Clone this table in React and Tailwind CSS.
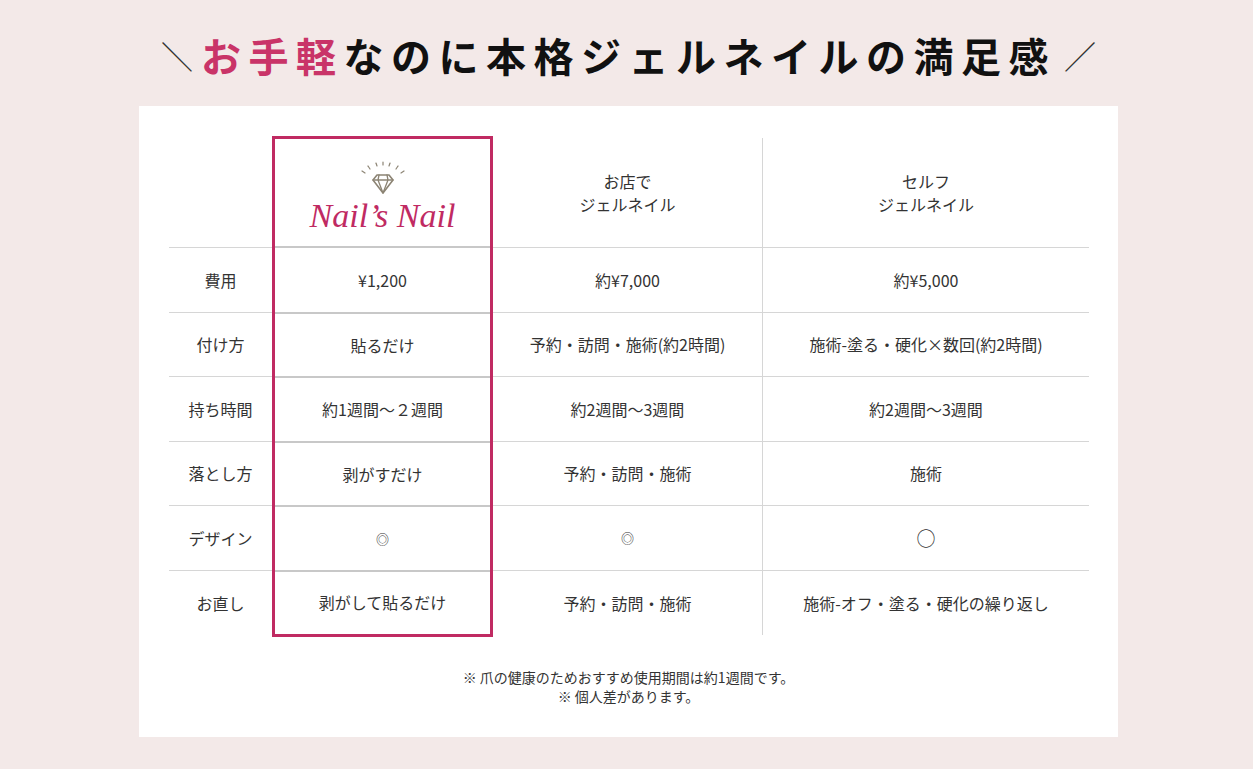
import React from "react";

const rows = [
    { label: "費用", nail: "¥1,200", shop: "約¥7,000", self: "約¥5,000" },
    { label: "付け方", nail: "貼るだけ", shop: "予約・訪問・施術(約2時間)", self: "施術-塗る・硬化×数回(約2時間)" },
    { label: "持ち時間", nail: "約1週間～２週間", shop: "約2週間～3週間", self: "約2週間～3週間" },
    { label: "落とし方", nail: "剥がすだけ", shop: "予約・訪問・施術", self: "施術" },
    { label: "デザイン", nail: "◎", shop: "◎", self: "○", symbol: true },
    { label: "お直し", nail: "剥がして貼るだけ", shop: "予約・訪問・施術", self: "施術-オフ・塗る・硬化の繰り返し" },
];

const DiamondIcon = () => (
    <svg width="54" height="36" viewBox="0 0 54 36" fill="none" stroke="#8c8474" strokeWidth="1.2" strokeLinecap="round">
        {/* rays */}
        <line x1="6" y1="10" x2="9" y2="12" />
        <line x1="12" y1="5" x2="14" y2="8" />
        <line x1="20" y1="2" x2="21" y2="5" />
        <line x1="27" y1="1" x2="27" y2="4" />
        <line x1="34" y1="2" x2="33" y2="5" />
        <line x1="42" y1="5" x2="40" y2="8" />
        <line x1="48" y1="10" x2="45" y2="12" />
        {/* diamond */}
        <path d="M21 14 H33 L37 19 L27 32 L17 19 Z" strokeWidth="1.6" strokeLinejoin="round" />
        <path d="M17 19 H37 M23 14 L22 19 L27 32 M31 14 L32 19 L27 32" strokeWidth="1.3" strokeLinejoin="round" />
    </svg>
);

const App = () => {
    const body = { fontFamily: '"Noto Sans CJK JP", "Noto Sans", sans-serif' };

    return (
        <div className="min-h-screen w-full bg-[#f3e9e8] pt-[25px] pb-[32px]" style={body}>
            <h2 className="flex items-center justify-center gap-[8px] h-[60px] text-[40px] leading-none text-[#111] pl-[4px]">
                <span className="font-normal text-[#333] text-[32px]">＼</span>
                <span className="font-bold tracking-[7.5px]">
                    <span className="text-[#c93468]">お手軽</span>なのに本格ジェルネイルの満足感
                </span>
                <span className="font-normal text-[#333] text-[32px]">／</span>
            </h2>

            <div className="w-[979px] ml-[139px] mt-[21px] bg-white pt-[32px] pl-[30px] pr-[29px] pb-[31px]">
                <div className="grid grid-cols-[103px_221px_270px_326px] text-[16px] text-[#333]">
                    {/* header */}
                    <div className="h-[110px] border-b border-[#d6d6d6]" />
                    <div className="border-x-[3px] border-t-[3px] border-[#c02a62] -mt-[2px] h-[112px] flex flex-col items-center justify-center relative">
                        <div className="pt-[6px]">
                            <DiamondIcon />
                        </div>
                        <div className="italic text-[#c02a62] text-[34px] leading-none mt-[2px]" style={{ fontFamily: '"Liberation Serif", "DejaVu Serif", serif' }}>
                            Nail’s Nail
                        </div>
                        <div className="absolute bottom-0 left-0 right-0 border-b-2 border-[#c8c8c8]" />
                    </div>
                    <div className="h-[110px] border-b border-r border-[#d6d6d6] flex flex-col items-center justify-center leading-[23px]">
                        <span>お店で</span>
                        <span>ジェルネイル</span>
                    </div>
                    <div className="h-[110px] border-b border-[#d6d6d6] flex flex-col items-center justify-center leading-[23px]">
                        <span>セルフ</span>
                        <span>ジェルネイル</span>
                    </div>

                    {rows.map((r, i) => {
                        const last = i === rows.length - 1;
                        const line = last ? "" : "border-b border-[#d6d6d6]";
                        return (
                            <React.Fragment key={r.label}>
                                <div className={`h-[64.5px] flex items-center justify-center ${line}`}>{r.label}</div>
                                <div className={`h-[64.5px] flex items-center justify-center border-x-[3px] border-[#c02a62] relative ${last ? "border-b-[3px] h-[66px]" : ""}`}>
                                    <span className={r.symbol ? "text-[13px]" : ""}>{r.nail}</span>
                                    {!last && <div className="absolute -bottom-px left-0 right-0 border-b-2 border-[#c8c8c8]" />}
                                </div>
                                <div className={`h-[64.5px] flex items-center justify-center border-r border-[#d6d6d6] ${line}`}>
                                    <span className={r.symbol ? "text-[13px]" : ""}>{r.shop}</span>
                                </div>
                                <div className={`h-[64.5px] flex items-center justify-center ${line}`}>
                                    <span className={r.symbol ? "text-[19px]" : ""}>{r.self}</span>
                                </div>
                            </React.Fragment>
                        );
                    })}
                </div>

                <div className="mt-[31px] -ml-[30px] -mr-[29px] text-center text-[14px] leading-[19px] text-[#333]">
                    <p>※ 爪の健康のためおすすめ使用期間は約1週間です。</p>
                    <p>※ 個人差があります。</p>
                </div>
            </div>
        </div>
    );
};

export default App;
